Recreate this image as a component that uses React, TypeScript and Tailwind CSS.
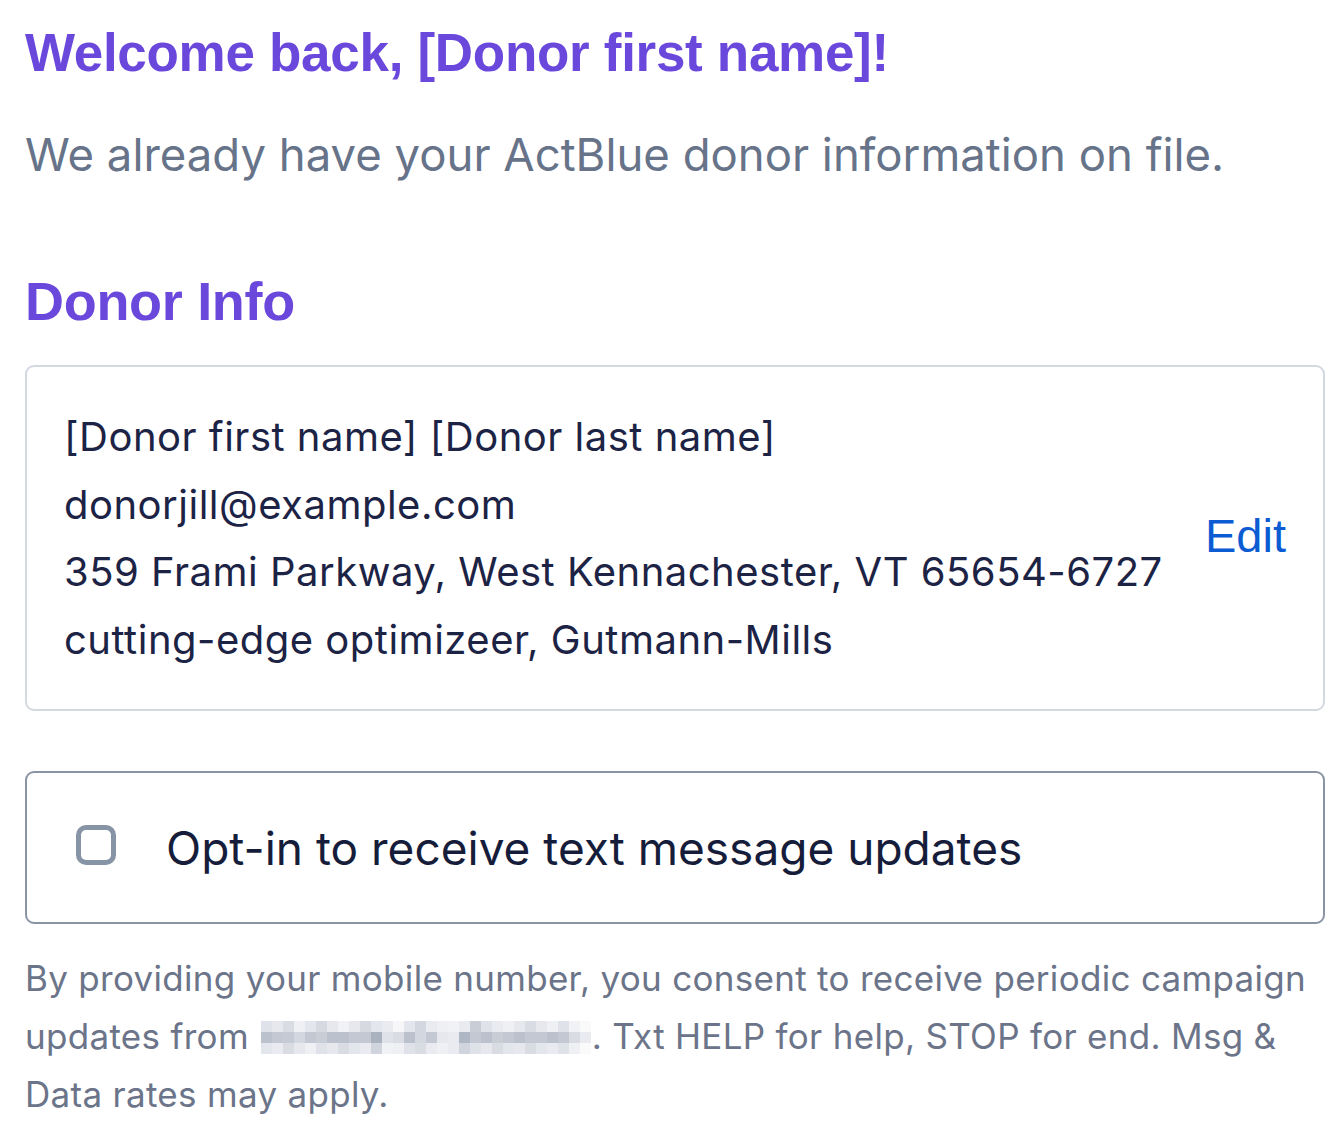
import React from "react";

const blurRows: string[][] = [
  ["bg-[#dfe2e8]","bg-[#e6e8ed]","bg-[#d9dce3]","bg-[#eef0f3]","bg-[#e3e6ec]","bg-[#d6d9e0]","bg-[#e6e8ed]","bg-[#f1f2f5]","bg-[#e6e8ed]","bg-[#d6d9e0]","bg-[#e3e6ec]","bg-[#e9ebf0]","bg-[#f7f7f9]","bg-[#e3e6ec]","bg-[#d3d7df]","bg-[#e9ebf0]","bg-[#eef0f3]","bg-[#f1f2f5]","bg-[#e9ebf0]","bg-[#c9cdd6]","bg-[#dfe2e8]","bg-[#e9ebf0]","bg-[#eef0f3]","bg-[#e6e8ed]","bg-[#d9dce3]","bg-[#e6e8ed]","bg-[#eef0f3]","bg-[#dfe2e8]","bg-[#f1f2f5]","bg-[#fafafb]"],
  ["bg-[#bcc2cd]","bg-[#c3c8d2]","bg-[#c6cad4]","bg-[#d3d7df]","bg-[#c3c8d2]","bg-[#c9cdd6]","bg-[#bcc2cd]","bg-[#bcc2cd]","bg-[#c3c8d2]","bg-[#c3c8d2]","bg-[#aab1bf]","bg-[#dfe2e8]","bg-[#d9dce3]","bg-[#bcc2cd]","bg-[#d3d7df]","bg-[#c3c8d2]","bg-[#e6e8ed]","bg-[#e9ebf0]","bg-[#b0b7c4]","bg-[#c3c8d2]","bg-[#bcc2cd]","bg-[#c9cdd6]","bg-[#c3c8d2]","bg-[#bcc2cd]","bg-[#c3c8d2]","bg-[#c3c8d2]","bg-[#bcc2cd]","bg-[#c3c8d2]","bg-[#d9dce3]","bg-[#e9ebf0]"],
  ["bg-[#e3e6ec]","bg-[#e9ebf0]","bg-[#d9dce3]","bg-[#e6e8ed]","bg-[#eef0f3]","bg-[#dfe2e8]","bg-[#e6e8ed]","bg-[#d9dce3]","bg-[#e3e6ec]","bg-[#e9ebf0]","bg-[#d0d4dc]","bg-[#f1f2f5]","bg-[#eef0f3]","bg-[#dfe2e8]","bg-[#d9dce3]","bg-[#e9ebf0]","bg-[#eef0f3]","bg-[#e9ebf0]","bg-[#d0d4dc]","bg-[#dfe2e8]","bg-[#e6e8ed]","bg-[#d9dce3]","bg-[#e3e6ec]","bg-[#e6e8ed]","bg-[#d9dce3]","bg-[#e3e6ec]","bg-[#e9ebf0]","bg-[#dfe2e8]","bg-[#eef0f3]","bg-[#fafafb]"],
];

function Blur() {
  return (
    <span className="inline-flex flex-col align-middle ml-[12px] mr-[1px] -mt-[4px]">
      {blurRows.map((row, i) => (
        <span key={i} className="flex">
          {row.map((c, j) => (
            <span key={j} className={`block w-[11px] h-[11px] ${c}`} />
          ))}
        </span>
      ))}
    </span>
  );
}

export default function App() {
  return (
    <div className="w-[1342px] min-h-[1142px] bg-white pl-[25px] pr-[17px] pt-[20px] font-['Inter',sans-serif]">
      <h1 className="font-['Liberation_Sans',Arial,sans-serif] font-bold text-[53px] leading-[66px] text-[#6b48dc] tracking-[-0.3px]">
        Welcome back, [Donor first name]!
      </h1>
      <p className="mt-[39px] text-[45.5px] leading-[60px] text-[#667389]">
        We already have your ActBlue donor information on file.
      </p>
      <h2 className="mt-[83px] font-['Liberation_Sans',Arial,sans-serif] font-bold text-[54px] leading-[66px] text-[#6b48dc] tracking-[-0.3px]">
        Donor Info
      </h2>
      <div className="mt-[31px] flex items-center justify-between rounded-[9px] border-2 border-[#d3d8e1] px-[37px] py-[36px]">
        <div className="text-[40px] leading-[67.5px] tracking-[0.5px] text-[#1c2345]">
          <div>[Donor first name] [Donor last name]</div>
          <div>donorjill@example.com</div>
          <div>359 Frami Parkway, West Kennachester, VT 65654-6727</div>
          <div>cutting-edge optimizeer, Gutmann-Mills</div>
        </div>
        <a className="-mt-[6px] font-['Liberation_Sans',Arial,sans-serif] text-[47px] leading-none text-[#0b5cd2]">Edit</a>
      </div>
      <label className="mt-[60px] flex h-[153px] items-center rounded-[9px] border-2 border-[#8a94a4] pl-[49px]">
        <span className="-mt-[6px] block h-[40px] w-[40px] shrink-0 rounded-[10px] border-[5px] border-[#8794a6]" />
        <span className="ml-[50px] mt-[2px] text-[46px] text-[#161d3b]">Opt-in to receive text message updates</span>
      </label>
      <p className="mt-[25px] text-[35px] leading-[58px] tracking-[0.3px] text-[#6b7489]">
        By providing your mobile number, you consent to receive periodic campaign updates from
        <Blur />. Txt HELP for help, STOP for end. Msg &amp; Data rates may apply.
      </p>
    </div>
  );
}
